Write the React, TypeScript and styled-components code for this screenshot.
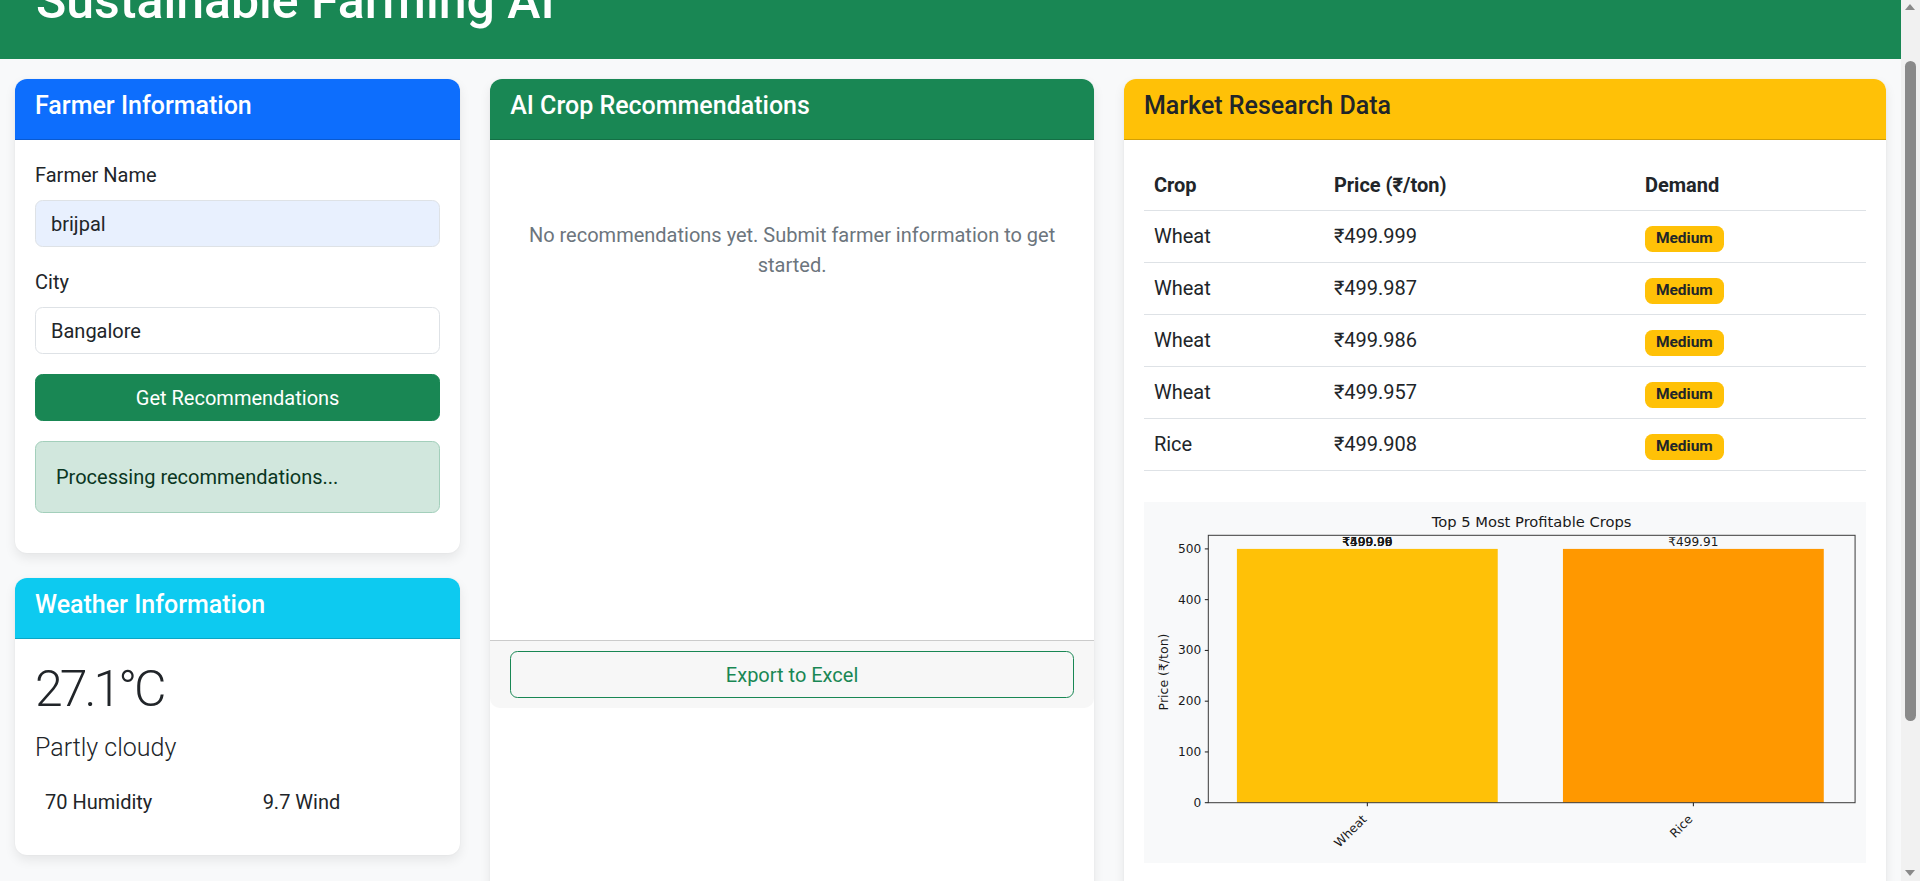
import React, { useLayoutEffect } from "react";
import styled, { createGlobalStyle } from "styled-components";

const GlobalStyle = createGlobalStyle`
  *, *::before, *::after { box-sizing: border-box; }
  html { background: #f8f9fa; scrollbar-width: none; }
  html::-webkit-scrollbar { display: none; }
  body {
    margin: 0;
    font-family: Roboto, "Noto Sans", "DejaVu Sans", sans-serif;
    font-size: 20px;
    line-height: 1.5;
    color: #212529;
    background: #f8f9fa;
  }
`;

const Page = styled.div`
  width: calc(100% - 19px);
  min-height: 100vh;
  padding-bottom: 174px;
`;

/* Browser scrollbar overlaying the right edge of the window */
const ScrollRail = styled.div`
  position: fixed;
  top: 0;
  right: 0;
  width: 19px;
  height: 100vh;
  background: #f1f1f1;
`;

const ScrollArrow = styled.div<{ $down?: boolean }>`
  position: absolute;
  left: 4px;
  ${(p) => (p.$down ? "bottom: 5px;" : "top: 4px;")}
  width: 0;
  height: 0;
  border-left: 5.5px solid transparent;
  border-right: 5.5px solid transparent;
  ${(p) => (p.$down ? "border-top: 6px solid #8a8a8a;" : "border-bottom: 6px solid #8a8a8a;")}
`;

const ScrollThumb = styled.div`
  position: absolute;
  left: 4px;
  top: 61px;
  width: 11px;
  height: 660px;
  border-radius: 6px;
  background: #8a8a8a;
`;

const TopBar = styled.header`
  background: #198754;
  color: #fff;
  padding: 30px 36px 28px;
`;

const AppTitle = styled.h1`
  margin: 0;
  font-size: 50px;
  font-weight: 500;
  line-height: 60px;
`;

const Row = styled.main`
  display: flex;
  align-items: stretch;
  margin-top: 20px;
`;

const Col = styled.div<{ $w: number }>`
  flex: 0 0 ${(p) => p.$w}%;
  max-width: ${(p) => p.$w}%;
  padding: 0 15px;
  display: flex;
  flex-direction: column;
`;

const Card = styled.section<{ $stretch?: boolean }>`
  background: #fff;
  border-radius: 12px;
  box-shadow: 0 5px 12px rgba(0, 0, 0, 0.08), 0 0 2px rgba(0, 0, 0, 0.05);
  overflow: hidden;
  display: flex;
  flex-direction: column;
  margin-bottom: 25px;
  ${(p) => (p.$stretch ? "flex: 1 1 auto; margin-bottom: 0;" : "")}
`;

const CardHeader = styled.div<{ $bg: string; $fg: string }>`
  background: ${(p) => p.$bg};
  color: ${(p) => p.$fg};
  padding: 12px 20px 8px;
  border-bottom: 1px solid rgba(0, 0, 0, 0.175);
`;

const CardTitle = styled.h5`
  margin: 0 0 10px;
  font-size: 25px;
  font-weight: 500;
  line-height: 30px;
`;

const CardBody = styled.div<{ $fixed?: number }>`
  padding: 20px;
  ${(p) => (p.$fixed ? `height: ${p.$fixed}px; overflow: auto;` : "")}
`;

const FieldLabel = styled.label`
  display: block;
  margin-bottom: 10px;
  line-height: 30px;
`;

const TextInput = styled.input<{ $filled?: boolean }>`
  display: block;
  width: 100%;
  height: 47px;
  padding: 7px 15px;
  margin-bottom: 20px;
  font: inherit;
  color: #212529;
  background: ${(p) => (p.$filled ? "#e8f0fe" : "#fff")};
  border: 1px solid #dee2e6;
  border-radius: 7.5px;
  outline: none;
`;

const SolidButton = styled.button`
  display: block;
  width: 100%;
  height: 47px;
  font: inherit;
  color: #fff;
  background: #198754;
  border: 1px solid #198754;
  border-radius: 7.5px;
`;

const Alert = styled.div`
  margin: 20px 0;
  padding: 20px;
  line-height: 30px;
  color: #0a3622;
  background: #d1e7dd;
  border: 1px solid #a3cfbb;
  border-radius: 7.5px;
`;

const Temp = styled.h2`
  margin: 0 0 10px;
  font-size: 50px;
  font-weight: 300;
  line-height: 60px;
  letter-spacing: -3px;
`;

const Condition = styled.p`
  margin: 0 0 20px;
  font-size: 25px;
  font-weight: 300;
  line-height: 37.5px;
`;

const Stats = styled.div`
  display: grid;
  grid-template-columns: 1fr 1fr;
  column-gap: 30px;
  margin-bottom: 18px;
`;

const Stat = styled.div`
  padding-left: 10px;
  line-height: 30px;
`;

const EmptyText = styled.p`
  margin: 0;
  padding: 60px 0;
  text-align: center;
  color: #6c757d;
  line-height: 30px;
`;

const CardFooter = styled.div`
  padding: 10px 20px;
  background: #f7f7f7;
  border-top: 1px solid rgba(0, 0, 0, 0.175);
  border-radius: 0 0 10px 10px;
`;

const OutlineButton = styled.button`
  display: block;
  width: 100%;
  height: 47px;
  font: inherit;
  color: #198754;
  background: transparent;
  border: 1px solid #198754;
  border-radius: 7.5px;
`;

const Table = styled.table`
  width: 100%;
  border-collapse: collapse;
  margin: 0;
`;

const Th = styled.th<{ $w?: number }>`
  text-align: left;
  font-weight: 700;
  padding: 10px;
  line-height: 30px;
  border-bottom: 1px solid #dee2e6;
  ${(p) => (p.$w ? `width: ${p.$w}px;` : "")}
`;

const Td = styled.td`
  padding: 10px;
  line-height: 31px;
  border-bottom: 1px solid #dee2e6;
`;

const Badge = styled.span`
  display: inline-block;
  padding: 5.5px 11px;
  font-size: 15.5px;
  font-weight: 700;
  line-height: 1;
  color: #212529;
  background: #ffc107;
  border-radius: 7.5px;
`;

const ChartBox = styled.div`
  margin: 31px 0 20px;
  height: 361px;
  background: #f8f9fa;
`;

const ChartSvg = styled.svg`
  display: block;
  width: 100%;
  height: 100%;
  font-family: "DejaVu Sans", sans-serif;
`;

const rows = [
  { crop: "Wheat", price: "₹499.999" },
  { crop: "Wheat", price: "₹499.987" },
  { crop: "Wheat", price: "₹499.986" },
  { crop: "Wheat", price: "₹499.957" },
  { crop: "Rice", price: "₹499.908" },
];

const AX_L = 64.3;
const AX_R = 711;
const AX_T = 33.3;
const AX_B = 300.7;
const yOf = (v: number) => AX_B - v * 0.5076;

function ProfitChart() {
  const ink = "#1a1a1a";
  const wheatX = 223.3;
  const riceX = 549.3;
  const barW = 260.8;
  const top = yOf(499.99);
  return (
    <ChartSvg viewBox="0 0 722 361" preserveAspectRatio="none">
      <text x={387.6} y={25.3} fontSize={14.7} textAnchor="middle" fill={ink}>
        Top 5 Most Profitable Crops
      </text>
      <rect x={wheatX - barW / 2} y={top} width={barW} height={AX_B - top} fill="#ffc107" />
      <rect x={riceX - barW / 2} y={top} width={barW} height={AX_B - top} fill="#ff9800" />
      <rect x={AX_L} y={AX_T} width={AX_R - AX_L} height={AX_B - AX_T} fill="none" stroke="#3a3a3a" strokeWidth={1} />
      {[0, 100, 200, 300, 400, 500].map((v) => (
        <g key={v}>
          <line x1={AX_L - 3.5} x2={AX_L} y1={yOf(v)} y2={yOf(v)} stroke={ink} strokeWidth={1} />
          <text x={AX_L - 7} y={yOf(v)} fontSize={12.2} textAnchor="end" dominantBaseline="central" fill={ink}>
            {v}
          </text>
        </g>
      ))}
      <text
        transform="translate(19.3 170) rotate(-90)"
        fontSize={12.5}
        textAnchor="middle"
        dominantBaseline="central"
        fill={ink}
      >
        Price (₹/ton)
      </text>
      {[wheatX, riceX].map((x) => (
        <line key={x} x1={x} x2={x} y1={AX_B} y2={AX_B + 3.5} stroke={ink} strokeWidth={1} />
      ))}
      <text transform={`translate(${wheatX} 318) rotate(-45)`} fontSize={12.2} textAnchor="end" fill={ink}>
        Wheat
      </text>
      <text transform={`translate(${riceX} 318) rotate(-45)`} fontSize={12.2} textAnchor="end" fill={ink}>
        Rice
      </text>
      {["₹500.00", "₹499.99", "₹499.99", "₹499.96"].map((t, i) => (
        <text key={i} x={wheatX} y={43.7} fontSize={12.1} textAnchor="middle" fill={ink}>
          {t}
        </text>
      ))}
      <text x={riceX} y={43.7} fontSize={12.1} textAnchor="middle" fill={ink}>
        ₹499.91
      </text>
    </ChartSvg>
  );
}

export default function App() {
  useLayoutEffect(() => {
    window.scrollTo(0, 59);
  }, []);

  return (
    <Page>
      <GlobalStyle />
      <TopBar>
        <AppTitle>Sustainable Farming AI</AppTitle>
      </TopBar>
      <Row>
        <Col $w={25}>
          <Card>
            <CardHeader $bg="#0d6efd" $fg="#fff">
              <CardTitle>Farmer Information</CardTitle>
            </CardHeader>
            <CardBody>
              <FieldLabel htmlFor="farmer-name">Farmer Name</FieldLabel>
              <TextInput id="farmer-name" $filled defaultValue="brijpal" />
              <FieldLabel htmlFor="city">City</FieldLabel>
              <TextInput id="city" defaultValue="Bangalore" />
              <SolidButton type="button">Get Recommendations</SolidButton>
              <Alert>Processing recommendations...</Alert>
            </CardBody>
          </Card>
          <Card>
            <CardHeader $bg="#0dcaf0" $fg="#fff">
              <CardTitle>Weather Information</CardTitle>
            </CardHeader>
            <CardBody>
              <Temp>27.1°C</Temp>
              <Condition>Partly cloudy</Condition>
              <Stats>
                <Stat>70 Humidity</Stat>
                <Stat>9.7 Wind</Stat>
              </Stats>
            </CardBody>
          </Card>
        </Col>
        <Col $w={100 / 3}>
          <Card $stretch>
            <CardHeader $bg="#198754" $fg="#fff">
              <CardTitle>AI Crop Recommendations</CardTitle>
            </CardHeader>
            <CardBody $fixed={500}>
              <EmptyText>No recommendations yet. Submit farmer information to get started.</EmptyText>
            </CardBody>
            <CardFooter>
              <OutlineButton type="button">Export to Excel</OutlineButton>
            </CardFooter>
          </Card>
        </Col>
        <Col $w={500 / 12}>
          <Card>
            <CardHeader $bg="#ffc107" $fg="#212529">
              <CardTitle>Market Research Data</CardTitle>
            </CardHeader>
            <CardBody>
              <Table>
                <thead>
                  <tr>
                    <Th $w={180}>Crop</Th>
                    <Th $w={311}>Price (₹/ton)</Th>
                    <Th>Demand</Th>
                  </tr>
                </thead>
                <tbody>
                  {rows.map((r, i) => (
                    <tr key={i}>
                      <Td>{r.crop}</Td>
                      <Td>{r.price}</Td>
                      <Td>
                        <Badge>Medium</Badge>
                      </Td>
                    </tr>
                  ))}
                </tbody>
              </Table>
              <ChartBox>
                <ProfitChart />
              </ChartBox>
            </CardBody>
          </Card>
        </Col>
      </Row>
      <ScrollRail aria-hidden="true">
        <ScrollArrow />
        <ScrollThumb />
        <ScrollArrow $down />
      </ScrollRail>
    </Page>
  );
}
